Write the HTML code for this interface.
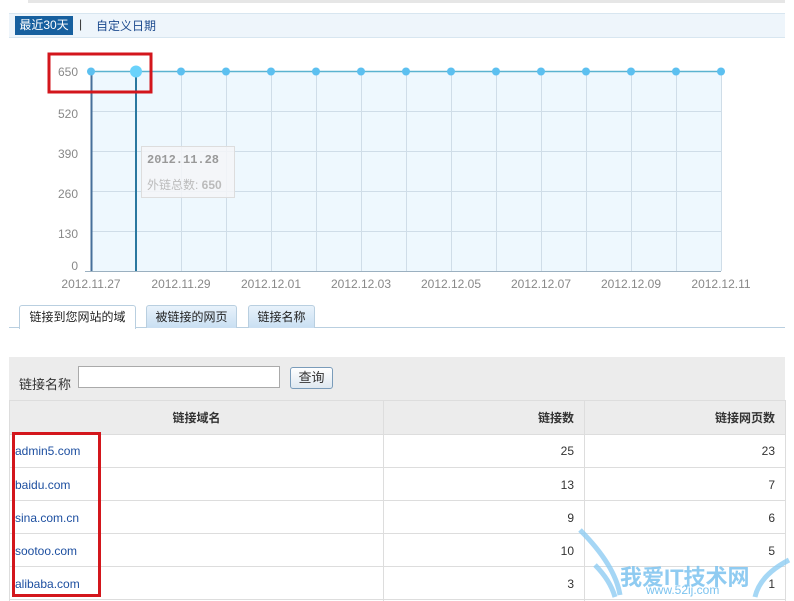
<!DOCTYPE html>
<html><head><meta charset="utf-8"><style>
body{margin:0;width:794px;height:601px;background:#fff;position:relative;overflow:hidden;font-family:"Liberation Sans","Noto Sans CJK SC",sans-serif;font-size:12px;color:#333}
.a{position:absolute}
.tab{position:absolute;top:305px;height:22px;border:1px solid #b9cfe0;border-bottom:none;border-radius:3px 3px 0 0;background:linear-gradient(#e8f2fb,#c9dff2);text-align:center;line-height:22px;color:#222}
.cell{position:absolute;height:33px;line-height:33px;border-bottom:1px solid #ddd}
a{color:#1d4fa0;text-decoration:none}
</style></head><body>
<div class="a" style="left:28px;top:0;width:757px;height:3px;background:#e6e6e6"></div>
<div class="a" style="left:9px;top:13px;width:776px;height:23px;background:#eef5fb;border-top:1px solid #d8e6f0;border-bottom:1px solid #d8e6f0"></div>
<div class="a" style="left:15px;top:16px;width:58px;height:19px;background:#17609f;color:#fff;line-height:19px;text-align:center">最近30天</div>
<div class="a" style="left:79px;top:17px;color:#333">|</div>
<div class="a" style="left:96px;top:17px;color:#1d4b8f">自定义日期</div>
<svg class="a" style="left:0;top:0" width="794" height="300">
<rect x="91" y="71" width="630" height="200" fill="#eef8fe"/>
<g stroke="#cfdde8" stroke-width="1">
<line x1="91" y1="111.5" x2="721" y2="111.5"/><line x1="91" y1="151.5" x2="721" y2="151.5"/><line x1="91" y1="191.5" x2="721" y2="191.5"/><line x1="91" y1="231.5" x2="721" y2="231.5"/>
<line x1="181.5" y1="71" x2="181.5" y2="271"/><line x1="226.5" y1="71" x2="226.5" y2="271"/><line x1="271.5" y1="71" x2="271.5" y2="271"/><line x1="316.5" y1="71" x2="316.5" y2="271"/><line x1="361.5" y1="71" x2="361.5" y2="271"/><line x1="406.5" y1="71" x2="406.5" y2="271"/><line x1="451.5" y1="71" x2="451.5" y2="271"/><line x1="496.5" y1="71" x2="496.5" y2="271"/><line x1="541.5" y1="71" x2="541.5" y2="271"/><line x1="586.5" y1="71" x2="586.5" y2="271"/><line x1="631.5" y1="71" x2="631.5" y2="271"/><line x1="676.5" y1="71" x2="676.5" y2="271"/><line x1="721.5" y1="71" x2="721.5" y2="271"/>
</g>
<line x1="85" y1="271.5" x2="721" y2="271.5" stroke="#9bb0c0"/>
<line x1="91" y1="71.5" x2="721" y2="71.5" stroke="#5ab3d0" stroke-width="1.5"/>
<line x1="91.5" y1="71" x2="91.5" y2="271" stroke="#466f9a" stroke-width="2"/>
<line x1="136" y1="71" x2="136" y2="271" stroke="#2a78a0" stroke-width="2"/>
<g fill="#5cc0f0">
<circle cx="91" cy="71.5" r="4"/><circle cx="181" cy="71.5" r="4"/><circle cx="226" cy="71.5" r="4"/><circle cx="271" cy="71.5" r="4"/><circle cx="316" cy="71.5" r="4"/><circle cx="361" cy="71.5" r="4"/><circle cx="406" cy="71.5" r="4"/><circle cx="451" cy="71.5" r="4"/><circle cx="496" cy="71.5" r="4"/><circle cx="541" cy="71.5" r="4"/><circle cx="586" cy="71.5" r="4"/><circle cx="631" cy="71.5" r="4"/><circle cx="676" cy="71.5" r="4"/><circle cx="721" cy="71.5" r="4"/>
<circle cx="136" cy="71.5" r="6" fill="#6ad2fb"/></g>
<rect x="49" y="54" width="102" height="38" fill="none" stroke="#d3161c" stroke-width="3"/>
<g fill="#888" font-size="12" text-anchor="end" font-family="Liberation Sans,sans-serif">
<text x="78" y="76">650</text><text x="78" y="118">520</text><text x="78" y="158">390</text><text x="78" y="198">260</text><text x="78" y="238">130</text><text x="78" y="270">0</text></g>
<g fill="#888" font-size="12" text-anchor="middle" font-family="Liberation Sans,sans-serif">
<text x="91" y="288">2012.11.27</text><text x="181" y="288">2012.11.29</text><text x="271" y="288">2012.12.01</text><text x="361" y="288">2012.12.03</text><text x="451" y="288">2012.12.05</text><text x="541" y="288">2012.12.07</text><text x="631" y="288">2012.12.09</text><text x="721" y="288">2012.12.11</text></g>
<rect x="141.5" y="146.5" width="93" height="51" fill="#f4f6f8" fill-opacity="0.85" stroke="#ddd"/>
<text x="147" y="163" font-size="12" font-weight="bold" fill="#999" font-family="Liberation Mono,monospace">2012.11.28</text>
<text x="147" y="189" font-size="12" fill="#bbb" font-family="Liberation Sans,Noto Sans CJK SC,sans-serif">外链总数: <tspan font-weight="bold">650</tspan></text>
</svg>
<div class="a" style="left:9px;top:327px;width:776px;height:1px;background:#b9cfe0"></div>
<div class="tab" style="left:19px;width:115px;background:#fff;height:23px">链接到您网站的域</div>
<div class="tab" style="left:146px;width:89px">被链接的网页</div>
<div class="tab" style="left:248px;width:65px">链接名称</div>
<div class="a" style="left:9px;top:357px;width:776px;height:43px;background:#ececec"></div>
<div class="a" style="left:19px;top:374px;font-size:13px">链接名称</div>
<div class="a" style="left:78px;top:366px;width:200px;height:20px;background:#fff;border:1px solid #aaa"></div>
<div class="a" style="left:290px;top:367px;width:41px;height:20px;border:1px solid #7a9cba;border-radius:3px;background:linear-gradient(#fff,#dfe8f0);text-align:center;line-height:20px;font-size:13px">查询</div>
<div class="a" style="left:9px;top:400px;width:776px;height:33px;background:#ececec;border-top:1px solid #ddd;border-bottom:1px solid #ddd"></div>
<div class="a" style="left:9px;top:400px;width:1px;height:201px;background:#ddd"></div>
<div class="a" style="left:383px;top:400px;width:1px;height:201px;background:#ddd"></div>
<div class="a" style="left:584px;top:400px;width:1px;height:201px;background:#ddd"></div>
<div class="a" style="left:785px;top:400px;width:1px;height:201px;background:#ddd"></div>
<div class="a" style="left:10px;top:409px;width:373px;text-align:center;font-weight:bold">链接域名</div>
<div class="a" style="left:384px;top:409px;width:190px;text-align:right;font-weight:bold">链接数</div>
<div class="a" style="left:585px;top:409px;width:190px;text-align:right;font-weight:bold">链接网页数</div>
<div class="a" style="left:10px;top:434px;width:775px">
<div style="height:33px;border-bottom:1px solid #ddd;line-height:34px;position:relative"><a style="position:absolute;left:5px">admin5.com</a><span style="position:absolute;right:211px">25</span><span style="position:absolute;right:10px">23</span></div>
<div style="height:32px;border-bottom:1px solid #ddd;line-height:34px;position:relative"><a style="position:absolute;left:5px">baidu.com</a><span style="position:absolute;right:211px">13</span><span style="position:absolute;right:10px">7</span></div>
<div style="height:32px;border-bottom:1px solid #ddd;line-height:34px;position:relative"><a style="position:absolute;left:5px">sina.com.cn</a><span style="position:absolute;right:211px">9</span><span style="position:absolute;right:10px">6</span></div>
<div style="height:32px;border-bottom:1px solid #ddd;line-height:34px;position:relative"><a style="position:absolute;left:5px">sootoo.com</a><span style="position:absolute;right:211px">10</span><span style="position:absolute;right:10px">5</span></div>
<div style="height:32px;border-bottom:1px solid #ddd;line-height:34px;position:relative"><a style="position:absolute;left:5px">alibaba.com</a><span style="position:absolute;right:211px">3</span><span style="position:absolute;right:10px">1</span></div>
</div>
<div class="a" style="left:12px;top:432px;width:83px;height:159px;border:3px solid #d3161c"></div>
<div class="a" style="left:620px;top:560px;font-size:22px;font-weight:bold;color:#7cc3ef;opacity:.85">我爱IT技术网</div>
<div class="a" style="left:646px;top:583px;font-size:12px;color:#7cc3ef">www.52ij.com</div>
<svg class="a" style="left:575px;top:525px" width="219" height="76"><g fill="none" stroke="#8fcdf3" stroke-width="5" opacity=".8"><path d="M5 5 Q40 40 45 70"/><path d="M20 40 Q35 55 40 72"/><path d="M214 35 Q185 50 180 72"/></g></svg>
</body></html>
